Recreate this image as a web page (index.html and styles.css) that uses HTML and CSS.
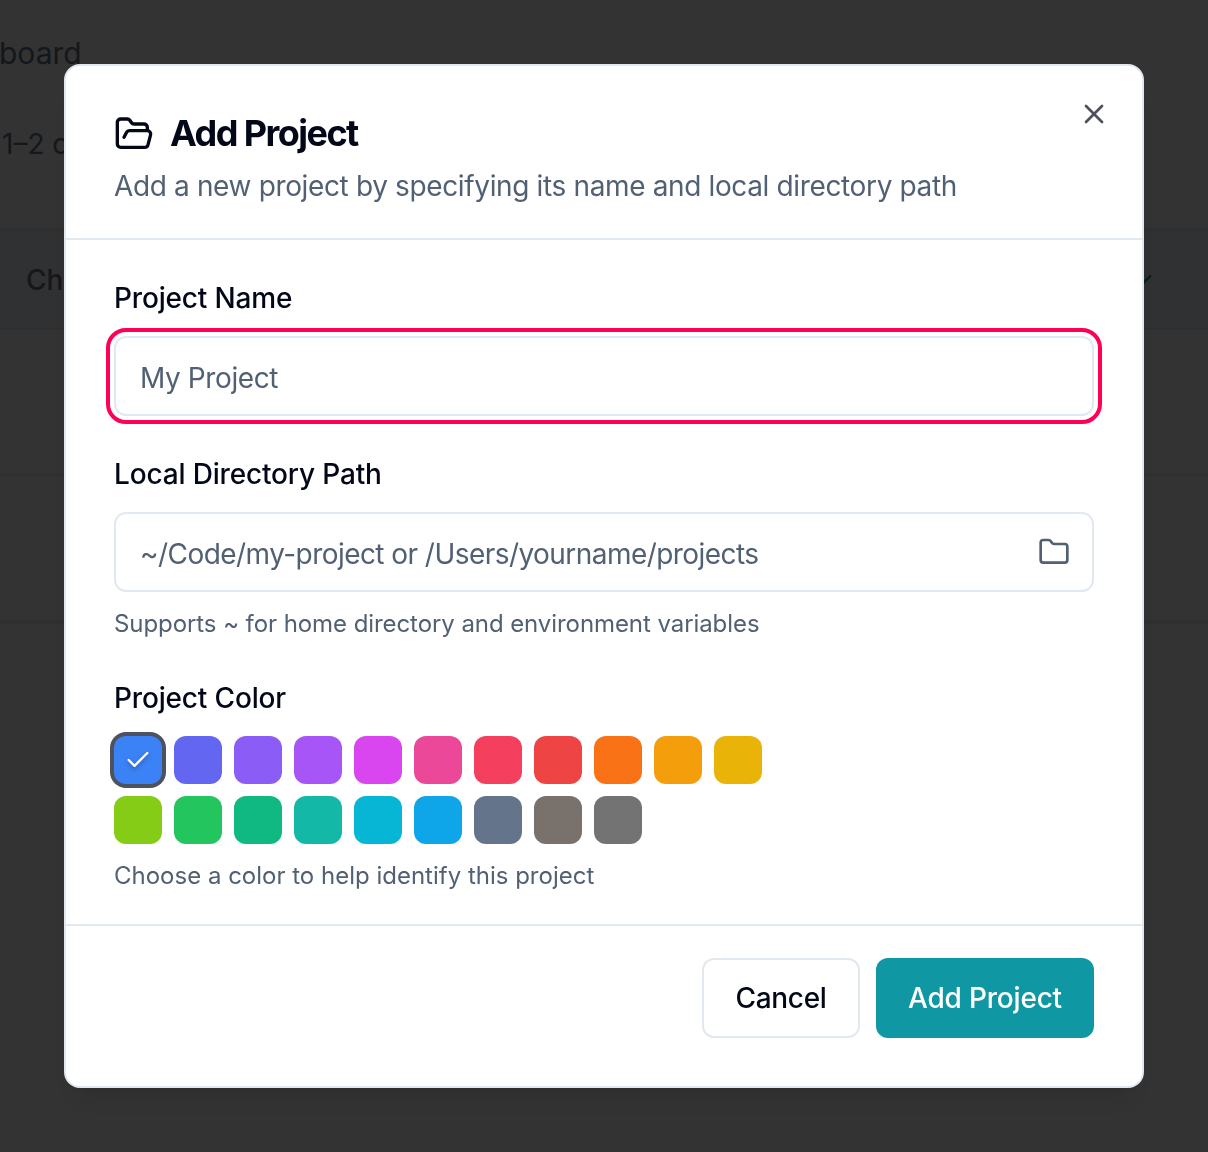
FILE: index.html
```html
<!DOCTYPE html>
<html lang="en">
<head>
    <meta charset="UTF-8">
    <meta name="viewport" content="width=device-width, initial-scale=1.0">
    <title>Add Project</title>
    <link rel="stylesheet" href="styles.css">
</head>
<body>
    <!-- Page behind the dialog -->
    <div class="page">
        <div class="page-header">
            <div class="page-title">board</div>
            <div class="page-subtitle">1–2 o</div>
        </div>
        <div class="table-head">
            <span>Cha</span>
            <svg class="table-check" viewBox="0 0 24 24"><path d="M20 6 9 17l-5-5"/></svg>
        </div>
        <div class="table-row"></div>
        <div class="table-row last"></div>
    </div>

    <!-- Dialog -->
    <div class="overlay">
        <div class="dialog">
            <button type="button" class="close" aria-label="Close">
                <svg viewBox="0 0 24 24"><path d="M18 6 6 18"/><path d="m6 6 12 12"/></svg>
            </button>

            <div class="dialog-header">
                <h2>
                    <svg viewBox="0 0 24 24"><path d="m6 14 1.5-2.9A2 2 0 0 1 9.24 10H20a2 2 0 0 1 1.94 2.5l-1.54 6a2 2 0 0 1-1.95 1.5H4a2 2 0 0 1-2-2V5a2 2 0 0 1 2-2h3.9a2 2 0 0 1 1.69.9l.81 1.2a2 2 0 0 0 1.67.9H18a2 2 0 0 1 2 2v2"/></svg>
                    <span>Add Project</span>
                </h2>
                <p class="description">Add a new project by specifying its name and local directory path</p>
            </div>

            <form class="dialog-body">
                <div class="field">
                    <label for="projectName">Project Name</label>
                    <input type="text" id="projectName" class="focused" placeholder="My Project">
                </div>

                <div class="field">
                    <label for="projectPath">Local Directory Path</label>
                    <div class="path-input">
                        <input type="text" id="projectPath" placeholder="~/Code/my-project or /Users/yourname/projects">
                        <button type="button" class="browse" aria-label="Browse">
                            <svg viewBox="0 0 24 24"><path d="M20 20a2 2 0 0 0 2-2V8a2 2 0 0 0-2-2h-7.9a2 2 0 0 1-1.69-.9L9.6 3.9A2 2 0 0 0 7.93 3H4a2 2 0 0 0-2 2v13a2 2 0 0 0 2 2Z"/></svg>
                        </button>
                    </div>
                    <p class="hint">Supports ~ for home directory and environment variables</p>
                </div>

                <div class="field">
                    <label>Project Color</label>
                    <div class="colors">
                        <button type="button" class="color blue selected"><svg viewBox="0 0 24 24"><path d="M20 6 9 17l-5-5"/></svg></button>
                        <button type="button" class="color indigo"></button>
                        <button type="button" class="color violet"></button>
                        <button type="button" class="color purple"></button>
                        <button type="button" class="color fuchsia"></button>
                        <button type="button" class="color pink"></button>
                        <button type="button" class="color rose"></button>
                        <button type="button" class="color red"></button>
                        <button type="button" class="color orange"></button>
                        <button type="button" class="color amber"></button>
                        <button type="button" class="color yellow"></button>
                        <button type="button" class="color lime"></button>
                        <button type="button" class="color green"></button>
                        <button type="button" class="color emerald"></button>
                        <button type="button" class="color teal"></button>
                        <button type="button" class="color cyan"></button>
                        <button type="button" class="color sky"></button>
                        <button type="button" class="color slate"></button>
                        <button type="button" class="color stone"></button>
                        <button type="button" class="color neutral"></button>
                    </div>
                    <p class="hint color-hint">Choose a color to help identify this project</p>
                </div>
            </form>

            <div class="dialog-footer">
                <button type="button" class="btn btn-cancel">Cancel</button>
                <button type="button" class="btn btn-primary">Add Project</button>
            </div>
        </div>
    </div>
</body>
</html>
```
FILE: styles.css
```css
* {
    box-sizing: border-box;
}

body {
    margin: 0;
    height: 1152px;
    overflow: hidden;
    background: #fff;
    color: #020817;
    font-family: Inter, sans-serif;
    font-size: 28px;
    line-height: 40px;
}

h2, p {
    margin: 0;
}

button, input {
    font: inherit;
}

svg {
    display: block;
    fill: none;
    stroke: currentColor;
    stroke-width: 2;
    stroke-linecap: round;
    stroke-linejoin: round;
}

/* Page behind the dialog */
.page-header {
    height: 232px;
    padding-top: 33px;
    border-bottom: 4px solid #e8eaee;
    color: #64748b;
}

.page-title {
    margin-left: -1px;
    font-size: 30px;
}

.page-subtitle {
    margin: 51px 0 0 2px;
}

.table-head {
    display: flex;
    align-items: center;
    justify-content: space-between;
    height: 98px;
    padding: 0 53px 0 26px;
    background: #f1f5f9;
    border-bottom: 2px solid #e2e8f0;
    color: #64748b;
    font-weight: 500;
}

.table-check {
    width: 28px;
    height: 28px;
    margin-top: 6px;
    color: #0f98a4;
}

.table-row {
    height: 146px;
    border-bottom: 2px solid #e2e8f0;
}

.table-row.last {
    height: 148px;
    border-bottom-width: 4px;
}

/* Dialog */
.overlay {
    position: fixed;
    inset: 0;
    display: flex;
    align-items: center;
    justify-content: center;
    background: rgba(0, 0, 0, 0.8);
}

.dialog {
    position: relative;
    width: 1080px;
    height: 1024px;
    background: #fff;
    border: 2px solid #e2e8f0;
    border-radius: 16px;
    box-shadow: 0 20px 30px -6px rgba(0, 0, 0, 0.1), 0 8px 12px -8px rgba(0, 0, 0, 0.1);
}

.close {
    position: absolute;
    top: 32px;
    right: 32px;
    padding: 0;
    border: none;
    background: none;
    color: #020817;
    opacity: 0.7;
}

.close svg, .browse svg {
    width: 32px;
    height: 32px;
}

.dialog-header {
    height: 174px;
    padding: 48px 48px 0;
    border-bottom: 2px solid #e2e8f0;
}

h2 {
    display: flex;
    gap: 16px;
    font-size: 36px;
    font-weight: 650;
    line-height: 38px;
    letter-spacing: -1.55px;
}

h2 svg {
    width: 40px;
    height: 40px;
}

.description {
    margin-top: 12px;
    color: #526074;
    letter-spacing: -0.36px;
}

.dialog-body {
    display: flex;
    flex-direction: column;
    gap: 38px;
    height: 686px;
    padding: 38px 48px 0;
    border-bottom: 2px solid #e2e8f0;
}

label {
    display: block;
    margin-bottom: 18px;
    font-weight: 500;
    letter-spacing: -0.16px;
}

input {
    display: block;
    width: 100%;
    height: 80px;
    padding: 4px 24px 0;
    background: #fff;
    border: 2px solid #e2e8f0;
    border-radius: 12px;
    color: #020817;
    letter-spacing: -0.4px;
}

#projectPath {
    letter-spacing: -0.55px;
}

input::placeholder {
    color: #526074;
    opacity: 1;
}

.focused {
    outline: 4px solid #ff0055;
    outline-offset: 4px;
}

.path-input {
    position: relative;
}

.browse {
    position: absolute;
    top: 24px;
    right: 24px;
    padding: 0;
    border: none;
    background: none;
    color: #526074;
}

.hint {
    margin-top: 16px;
    font-size: 24px;
    line-height: 32px;
    letter-spacing: -0.075px;
    color: #526074;
}

.color-hint {
    letter-spacing: 0;
}

.colors {
    display: flex;
    flex-wrap: wrap;
    gap: 12px;
    max-width: 672px;
}

.color {
    display: flex;
    align-items: center;
    justify-content: center;
    width: 48px;
    height: 48px;
    padding: 0;
    border: none;
    border-radius: 12px;
}

.color.selected {
    box-shadow: 0 0 0 4px #4e525d;
}

.color svg {
    width: 28px;
    height: 28px;
    color: #fff;
    filter: drop-shadow(0 2px 2px rgba(0, 0, 0, 0.3));
}

.blue { background: #3b82f6; }
.indigo { background: #6366f1; }
.violet { background: #8b5cf6; }
.purple { background: #a855f7; }
.fuchsia { background: #d946ef; }
.pink { background: #ec4899; }
.rose { background: #f43f5e; }
.red { background: #ef4444; }
.orange { background: #f97316; }
.amber { background: #f59e0b; }
.yellow { background: #eab308; }
.lime { background: #84cc16; }
.green { background: #22c55e; }
.emerald { background: #10b981; }
.teal { background: #14b8a6; }
.cyan { background: #06b6d4; }
.sky { background: #0ea5e9; }
.slate { background: #64748b; }
.stone { background: #78716c; }
.neutral { background: #737373; }

.dialog-footer {
    display: flex;
    justify-content: flex-end;
    gap: 16px;
    padding: 32px 48px 0;
}

.btn {
    height: 80px;
    padding: 0;
    border: none;
    border-radius: 12px;
    font-weight: 500;
    letter-spacing: -0.3px;
}

.btn-cancel {
    width: 158px;
    background: #fff;
    border: 2px solid #e2e8f0;
    color: #020817;
}

.btn-primary {
    width: 218px;
    background: #0f98a4;
    color: #fff;
    letter-spacing: -0.2px;
}
```
